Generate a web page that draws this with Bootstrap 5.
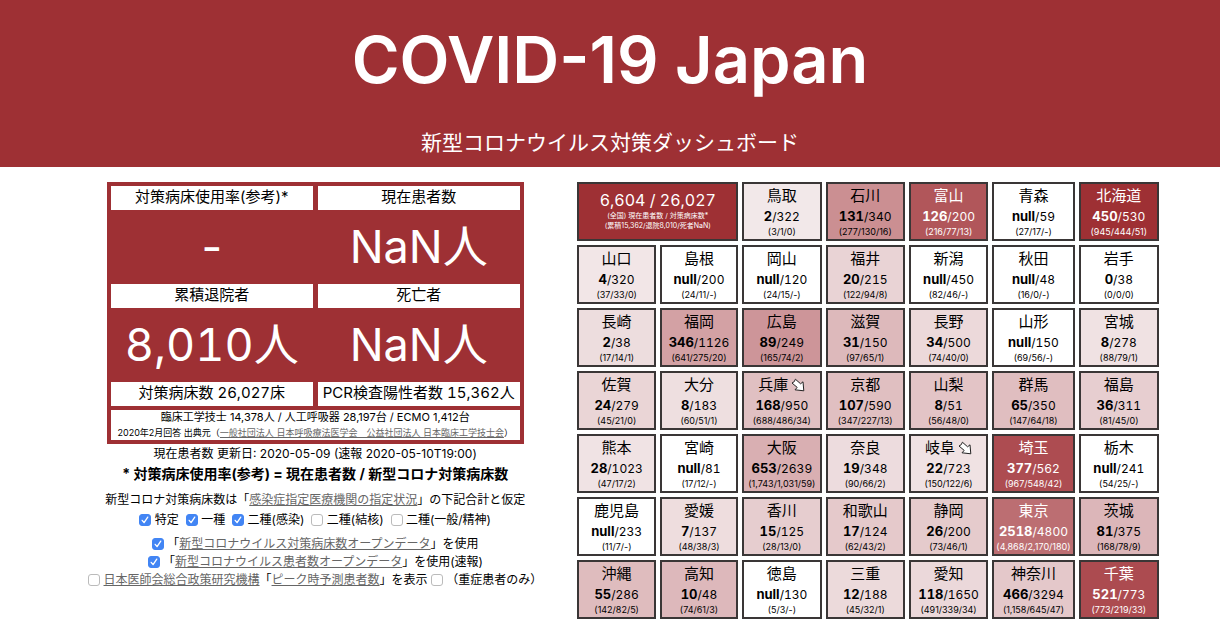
<!DOCTYPE html>
<html lang="ja">
<head>
<meta charset="utf-8">
<meta name="viewport" content="width=device-width, initial-scale=1">
<title>COVID-19 Japan</title>
<link href="https://cdn.jsdelivr.net/npm/bootstrap@5.3.0/dist/css/bootstrap.min.css" rel="stylesheet">
<style>
  :root { --brand: #9e3034; }
  body { font-family: "Inter", "Noto Sans CJK JP", sans-serif; color: #000; font-size: 12px; line-height: 18px; }
  a { color: #666; }
  .figures { font-variant-numeric: tabular-nums; }
  .hero { background: var(--brand); padding: 24px 0 12px; }
  .hero h1 { font-size: 65px; line-height: 72px; font-weight: 600; }
  .hero p { font-size: 21px; line-height: 24px; margin-top: 35px; }
  .dash { display: grid; grid-template-columns: 508fr 581fr; column-gap: 8px; padding: 15px 5% 20px; }
  .summary { background: var(--brand); width: 82%; padding: 4px; display: grid; grid-template-columns: 1fr 1fr; column-gap: 5px; }
  .label-box { background: #fff; font-size: 15px; line-height: 22px; padding-bottom: 2px; white-space: nowrap; }
  .big { color: #fff; font-size: 45px; line-height: 74px; font-weight: 400; }
  .source { grid-column: 1 / -1; background: #fff; margin-top: 4px; font-size: 11px; line-height: 15px; white-space: nowrap; }
  .source small { font-size: 9px; }
  .notes { white-space: nowrap; padding-top: 1px; }
  .formula { font-size: 14px; line-height: 22px; margin-bottom: 5px; }
  .beds-note, .kinds { line-height: 20px; }
  .kinds { gap: 7px; margin-bottom: 5px; }
  .form-check-input { width: 12px; height: 12px; margin: 0; border-color: #bbb; border-radius: 3px; vertical-align: -2px; }
  .form-check-input:checked { background-color: #4285f4; border-color: #4285f4; }
  .form-check-input:checked[type=checkbox] { background-image: url("data:image/svg+xml,%3csvg xmlns='http://www.w3.org/2000/svg' viewBox='0 0 12 12'%3e%3cpath fill='none' stroke='%23fff' stroke-width='1.6' stroke-linecap='round' stroke-linejoin='round' d='M2.6 6.4l2.3 2.8 4.4-6.6'/%3e%3c/svg%3e"); }
  .prefs { display: grid; grid-template-columns: 78fr 78fr 79fr 79fr 79fr 82fr 80fr; gap: 4px; align-content: start; }
  .tile { border: 2px solid #3a3636; min-width: 0; white-space: nowrap; color: #000; padding-top: 1px; height: 59px; }
  .tile.hot { color: #fff; }
  .tile .name { font-size: 15px; line-height: 22px; }
  .tile .beds { font-size: 12px; line-height: 18px; }
  .tile .beds b { font-size: 13px; font-weight: 700; }
  .tile .total { font-size: 9px; line-height: 12px; }
  .nation { grid-column: span 2; background: var(--brand); color: #fff; padding-top: 5px; }
  .nation .sum { font-size: 16px; line-height: 22px; }
  .nation .detail { font-size: 7px; line-height: 10px; }
  .trend { width: 14px; height: 14px; vertical-align: -2px; margin-left: 3px; }
</style>
</head>
<body>
<header class="hero text-center text-white">
  <h1 class="mb-0">COVID-19 Japan</h1>
  <p class="mb-0">新型コロナウイルス対策ダッシュボード</p>
</header>
<main class="dash text-center">
  <section>
    <div class="summary mx-auto">
      <div class="label-box">対策病床使用率(参考)*</div><div class="label-box">現在患者数</div>
      <div class="big">-</div><div class="big">NaN人</div>
      <div class="label-box">累積退院者</div><div class="label-box">死亡者</div>
      <div class="big figures">8,010人</div><div class="big">NaN人</div>
      <div class="label-box figures">対策病床数 26,027床</div><div class="label-box figures">PCR検査陽性者数 15,362人</div>
      <div class="source">臨床工学技士 14,378人 / 人工呼吸器 28,197台 / ECMO 1,412台<br><small>2020年2月回答 出典元（<a href="#">一般社団法人 日本呼吸療法医学会　公益社団法人 日本臨床工学技士会</a>）</small></div>
    </div>
    <div class="notes">
      <div>現在患者数 更新日: 2020-05-09 (速報 2020-05-10T19:00)</div>
      <div class="formula fw-bold">* 対策病床使用率(参考) = 現在患者数 / 新型コロナ対策病床数</div>
      <div class="beds-note">新型コロナ対策病床数は「<a href="#">感染症指定医療機関の指定状況</a>」の下記合計と仮定</div>
      <div class="kinds d-flex justify-content-center">
        <span><input class="form-check-input" type="checkbox" id="k1" checked> <label for="k1">特定</label></span>
        <span><input class="form-check-input" type="checkbox" id="k2" checked> <label for="k2">一種</label></span>
        <span><input class="form-check-input" type="checkbox" id="k3" checked> <label for="k3">二種(感染)</label></span>
        <span><input class="form-check-input" type="checkbox" id="k4"> <label for="k4">二種(結核)</label></span>
        <span><input class="form-check-input" type="checkbox" id="k5"> <label for="k5">二種(一般/精神)</label></span>
      </div>
      <div><input class="form-check-input" type="checkbox" id="o1" checked> <label for="o1">「<a href="#">新型コロナウイルス対策病床数オープンデータ</a>」を使用</label></div>
      <div><input class="form-check-input" type="checkbox" id="o2" checked> <label for="o2">「<a href="#">新型コロナウイルス患者数オープンデータ</a>」を使用(速報)</label></div>
      <div><input class="form-check-input" type="checkbox" id="o3"> <label for="o3"><a href="#">日本医師会総合政策研究機構</a>「<a href="#">ピーク時予測患者数</a>」を表示</label> <input class="form-check-input" type="checkbox" id="o4"> <label for="o4">（重症患者のみ）</label></div>
    </div>
  </section>
  <section class="prefs" id="prefs">
    <div class="tile nation">
      <div class="sum figures">6,604 / 26,027</div>
      <div class="detail">(全国) 現在患者数 / 対策病床数*<br>(累積15,362/退院8,010/死者NaN)</div>
    </div>
  </section>
</main>
<script>
  // name, current patients, beds, cumulative/discharged/deaths, falling trend
  const prefs = [
    ["鳥取",2,322,"3/1/0"],["石川",131,340,"277/130/16"],["富山",126,200,"216/77/13"],["青森",null,59,"27/17/-"],["北海道",450,530,"945/444/51"],
    ["山口",4,320,"37/33/0"],["島根",null,200,"24/11/-"],["岡山",null,120,"24/15/-"],["福井",20,215,"122/94/8"],["新潟",null,450,"82/46/-"],["秋田",null,48,"16/0/-"],["岩手",0,38,"0/0/0"],
    ["長崎",2,38,"17/14/1"],["福岡",346,1126,"641/275/20"],["広島",89,249,"165/74/2"],["滋賀",31,150,"97/65/1"],["長野",34,500,"74/40/0"],["山形",null,150,"69/56/-"],["宮城",8,278,"88/79/1"],
    ["佐賀",24,279,"45/21/0"],["大分",8,183,"60/51/1"],["兵庫",168,950,"688/486/34",true],["京都",107,590,"347/227/13"],["山梨",8,51,"56/48/0"],["群馬",65,350,"147/64/18"],["福島",36,311,"81/45/0"],
    ["熊本",28,1023,"47/17/2"],["宮崎",null,81,"17/12/-"],["大阪",653,2639,"1,743/1,031/59"],["奈良",19,348,"90/66/2"],["岐阜",22,723,"150/122/6",true],["埼玉",377,562,"967/548/42"],["栃木",null,241,"54/25/-"],
    ["鹿児島",null,233,"11/7/-"],["愛媛",7,137,"48/38/3"],["香川",15,125,"28/13/0"],["和歌山",17,124,"62/43/2"],["静岡",26,200,"73/46/1"],["東京",2518,4800,"4,868/2,170/180"],["茨城",81,375,"168/78/9"],
    ["沖縄",55,286,"142/82/5"],["高知",10,48,"74/61/3"],["徳島",null,130,"5/3/-"],["三重",12,188,"45/32/1"],["愛知",118,1650,"491/339/34"],["神奈川",466,3294,"1,158/645/47"],["千葉",521,773,"773/219/33"]
  ];
  const arrow = '<svg class="trend" viewBox="0 0 14 14" aria-hidden="true"><path d="M4.4 1.2 L9.6 5.8 L12 3.8 L12.8 12.8 L4 11.8 L6.2 9.4 L1 5 Q3.8 4.2 4.4 1.2 Z" fill="#fff" stroke="#222" stroke-width="1" stroke-linejoin="round"/></svg>';
  const shade = r => `rgb(${Math.max(158, Math.round(243 - 105 * r))},${Math.max(48, Math.round(233 - 234 * r))},${Math.max(52, Math.round(234 - 228 * r))})`;
  document.getElementById("prefs").insertAdjacentHTML("beforeend", prefs.map(([name, now, beds, total, falling]) => {
    const ratio = now / beds;
    return `<div class="tile${ratio > 0.5 ? " hot" : ""}" style="background:${now ? shade(ratio) : "#fff"}">
      <div class="name">${name}${falling ? arrow : ""}</div><div class="beds figures"><b>${now}</b>/${beds}</div><div class="total">(${total})</div></div>`;
  }).join(""));
</script>
<script src="https://cdn.jsdelivr.net/npm/bootstrap@5.3.0/dist/js/bootstrap.bundle.min.js"></script>
</body>
</html>
